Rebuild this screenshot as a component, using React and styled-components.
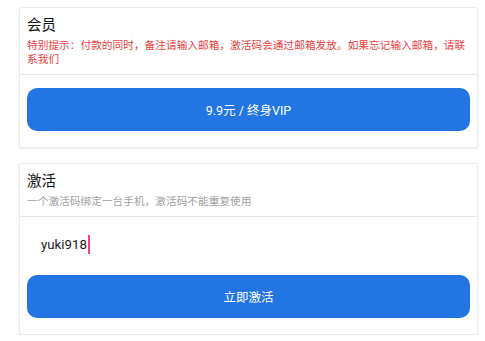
import styled, { createGlobalStyle } from "styled-components";

const GlobalStyle = createGlobalStyle`
  html, body {
    margin: 0;
    padding: 0;
    background: #ffffff;
    font-family: Roboto, "Noto Sans CJK SC", sans-serif;
  }
`;

const Page = styled.div`
  display: flex;
  flex-direction: column;
  gap: 15px;
  padding: 7px 7px 0 19px;
`;

const Card = styled.section`
  background: #fff;
  border: 1px solid #ececec;
  box-shadow: 0 1px 2px rgba(0, 0, 0, 0.08);
  border-radius: 2px;
`;

const Header = styled.div`
  padding: 8px 7px 7px;
  border-bottom: 1px solid #e6e6e6;
`;

const Title = styled.h3`
  margin: 0;
  font-size: 14.5px;
  font-weight: 400;
  line-height: 20px;
  color: #111;
`;

const Note = styled.p`
  margin: 3px 0 0;
  font-size: 10.7px;
  line-height: 14px;
  color: ${(p) => (p.$alert ? "#ea3e3e" : "#a0a0a0")};
`;

const Body = styled.div`
  display: flex;
  flex-direction: column;
  padding: ${(p) => p.$top}px 7px 16px;
`;

const Button = styled.button`
  height: 43px;
  border: none;
  border-radius: 10px;
  background: #2475e4;
  color: #fff;
  font-family: inherit;
  font-size: 12.5px;
`;

const Field = styled.div`
  display: flex;
  align-items: center;
  height: 43px;
  padding: 0 14px;
  margin-bottom: 9px;
  font-size: 13.3px;
  color: #1a1a1a;
`;

const Caret = styled.span`
  display: inline-block;
  width: 2px;
  height: 19px;
  margin-left: 1px;
  background: #f0457f;
`;

export default function App() {
  return (
    <>
      <GlobalStyle />
      <Page>
        <Card>
          <Header>
            <Title>会员</Title>
            <Note $alert>
              特别提示：付款的同时，备注请输入邮箱，激活码会通过邮箱发放。如果忘记输入邮箱，请联系我们
            </Note>
          </Header>
          <Body $top={13}>
            <Button>9.9元 / 终身VIP</Button>
          </Body>
        </Card>
        <Card>
          <Header>
            <Title>激活</Title>
            <Note>一个激活码绑定一台手机，激活码不能重复使用</Note>
          </Header>
          <Body $top={6}>
            <Field>
              yuki918
              <Caret />
            </Field>
            <Button>立即激活</Button>
          </Body>
        </Card>
      </Page>
    </>
  );
}
